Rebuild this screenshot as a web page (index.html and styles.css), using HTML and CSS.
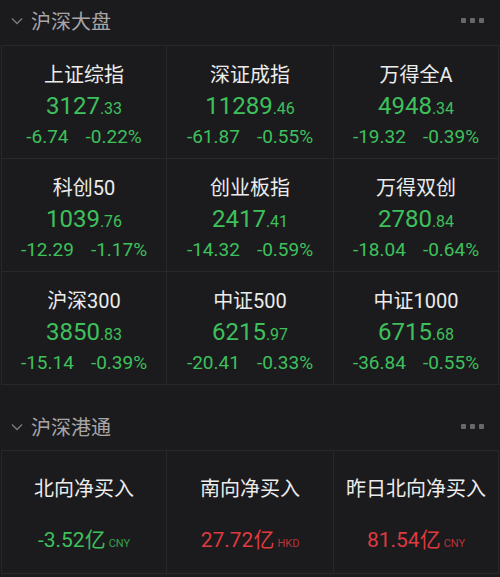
FILE: index.html
```html
<!DOCTYPE html>
<html lang="zh-CN">
<head>
<meta charset="utf-8">
<title>沪深大盘</title>
<link rel="stylesheet" href="styles.css">
</head>
<body>
<section class="section">
  <div class="head">
    <div class="title">
      <svg class="chev" width="12" height="8" viewBox="0 0 12 8"><polyline points="1,1.5 6,6.5 11,1.5" fill="none" stroke="#7c7c80" stroke-width="1.3"/></svg>
      <span>沪深大盘</span>
    </div>
    <div class="dots"><i></i><i></i><i></i></div>
  </div>
  <div class="grid idx">
    <div class="cell"><div class="name">上证综指</div><div class="value up"><span class="int">3127</span><span class="dec">.33</span></div><div class="chg up"><span>-6.74</span><span>-0.22%</span></div></div>
    <div class="cell"><div class="name">深证成指</div><div class="value up"><span class="int">11289</span><span class="dec">.46</span></div><div class="chg up"><span>-61.87</span><span>-0.55%</span></div></div>
    <div class="cell"><div class="name">万得全A</div><div class="value up"><span class="int">4948</span><span class="dec">.34</span></div><div class="chg up"><span>-19.32</span><span>-0.39%</span></div></div>
    <div class="cell"><div class="name">科创50</div><div class="value up"><span class="int">1039</span><span class="dec">.76</span></div><div class="chg up"><span>-12.29</span><span>-1.17%</span></div></div>
    <div class="cell"><div class="name">创业板指</div><div class="value up"><span class="int">2417</span><span class="dec">.41</span></div><div class="chg up"><span>-14.32</span><span>-0.59%</span></div></div>
    <div class="cell"><div class="name">万得双创</div><div class="value up"><span class="int">2780</span><span class="dec">.84</span></div><div class="chg up"><span>-18.04</span><span>-0.64%</span></div></div>
    <div class="cell"><div class="name">沪深300</div><div class="value up"><span class="int">3850</span><span class="dec">.83</span></div><div class="chg up"><span>-15.14</span><span>-0.39%</span></div></div>
    <div class="cell"><div class="name">中证500</div><div class="value up"><span class="int">6215</span><span class="dec">.97</span></div><div class="chg up"><span>-20.41</span><span>-0.33%</span></div></div>
    <div class="cell"><div class="name">中证1000</div><div class="value up"><span class="int">6715</span><span class="dec">.68</span></div><div class="chg up"><span>-36.84</span><span>-0.55%</span></div></div>
  </div>
</section>
<section class="section second">
  <div class="head">
    <div class="title">
      <svg class="chev" width="12" height="8" viewBox="0 0 12 8"><polyline points="1,1.5 6,6.5 11,1.5" fill="none" stroke="#7c7c80" stroke-width="1.3"/></svg>
      <span>沪深港通</span>
    </div>
    <div class="dots"><i></i><i></i><i></i></div>
  </div>
  <div class="grid flow">
    <div class="cell"><div class="name">北向净买入</div><div class="amt green"><span class="num">-3.52亿</span><span class="cur">CNY</span></div></div>
    <div class="cell"><div class="name">南向净买入</div><div class="amt red"><span class="num">27.72亿</span><span class="cur">HKD</span></div></div>
    <div class="cell"><div class="name">昨日北向净买入</div><div class="amt red"><span class="num">81.54亿</span><span class="cur">CNY</span></div></div>
  </div>
</section>
</body>
</html>
```

FILE: styles.css
```css
* { box-sizing: border-box; }
html, body {
  margin: 0;
  padding: 0;
  background: #1b1b1d;
}
body {
  width: 500px;
  height: 577px;
  overflow: hidden;
  font-family: Roboto, "Noto Sans CJK SC", sans-serif;
  color: #ececec;
}
.head {
  height: 45px;
  display: flex;
  align-items: center;
  justify-content: space-between;
  padding: 0 16px 0 11px;
}
.title {
  display: flex;
  align-items: center;
  gap: 8px;
  font-family: "Noto Sans CJK SC", sans-serif;
  font-size: 20px;
  line-height: 24px;
  color: #a6a6a8;
  padding-bottom: 4px;
}
.chev { display: block; margin-top: 1px; }
.dots {
  display: flex;
  gap: 4px;
  padding-bottom: 4px;
}
.dots i {
  display: block;
  width: 5px;
  height: 5px;
  border-radius: 1px;
  background: #68686b;
}
.second { margin-top: 20px; }
.second .head .title, .second .head .dots { padding-bottom: 2px; }
.grid {
  display: grid;
  grid-template-columns: 165px 167px 1fr;
  margin: 0 1px;
  border-top: 1px solid #28282b;
  border-left: 1px solid #28282b;
}
.cell {
  border-right: 1px solid #28282b;
  border-bottom: 1px solid #28282b;
  display: flex;
  flex-direction: column;
  align-items: center;
}
.idx .cell { height: 113px; padding-top: 17px; }
.name {
  font-family: "Noto Sans CJK SC", sans-serif;
  font-size: 20px;
  line-height: 24px;
  color: #ececec;
}
.idx .name { font-family: Roboto, "Noto Sans CJK SC", sans-serif; }
.up, .green { color: #3ec05c; }
.red { color: #df3a40; }
.value {
  margin-top: 4px;
  line-height: 30px;
  white-space: nowrap;
}
.value .int { font-size: 24px; }
.value .dec { font-size: 16px; }
.chg {
  margin-top: 2px;
  display: flex;
  gap: 17px;
  font-size: 19px;
  line-height: 22px;
  white-space: nowrap;
}
.flow .cell { height: 123px; padding-top: 25px; }
.amt {
  margin-top: 26px;
  line-height: 28px;
  white-space: nowrap;
  display: flex;
  align-items: baseline;
  gap: 3px;
}
.amt .num {
  font-family: Roboto, "Noto Sans CJK SC", sans-serif;
  font-size: 21px;
}
.amt .cur {
  font-size: 11px;
  opacity: 0.8;
}
```
